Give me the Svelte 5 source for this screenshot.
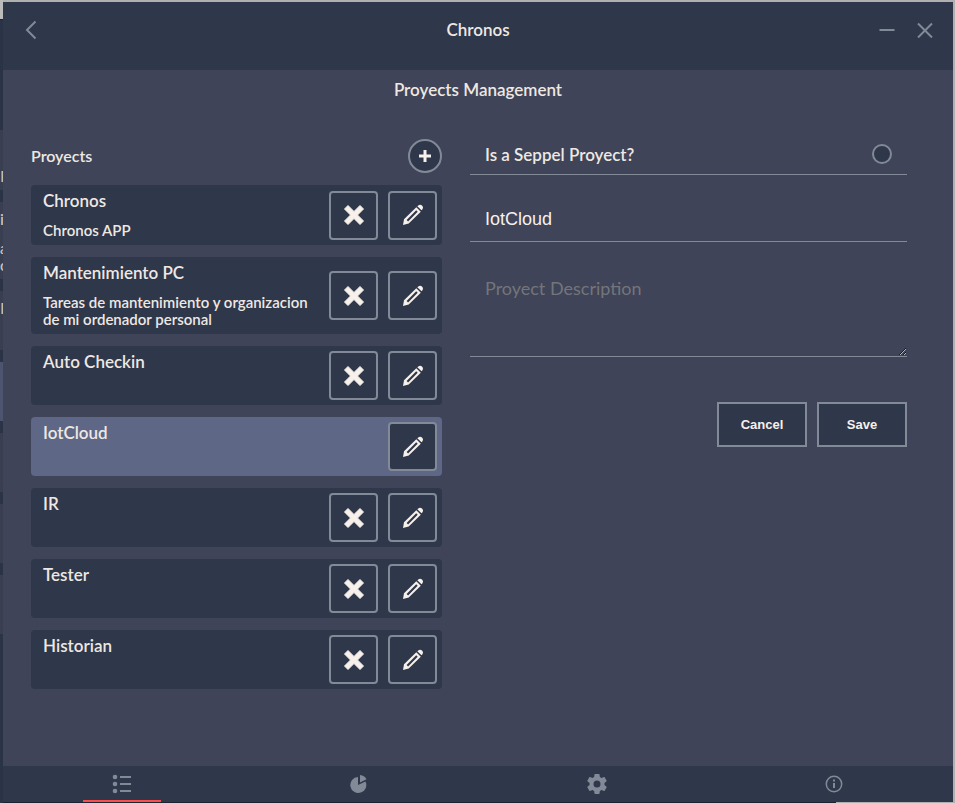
<script>
  let projects = $state([
    { name: 'Chronos', description: 'Chronos APP' },
    { name: 'Mantenimiento PC', description: 'Tareas de mantenimiento y organizacion de mi ordenador personal' },
    { name: 'Auto Checkin', description: '' },
    { name: 'IotCloud', description: '' },
    { name: 'IR', description: '' },
    { name: 'Tester', description: '' },
    { name: 'Historian', description: '' }
  ]);
  let selected = $state('IotCloud');
  let name = $state('IotCloud');
  let description = $state('');
  let seppel = $state(false);

  function edit(project) {
    selected = project.name;
    name = project.name;
    description = project.description;
  }

  function remove(project) {
    projects = projects.filter((p) => p !== project);
  }
</script>

<div class="desktop">
  <div class="behind" aria-hidden="true">
    <div class="strip title"></div>
    <div class="strip bar"></div>
    <div class="strip head">P</div>
    <div class="strip tall"><b>i</b><span>a</span><span>o</span></div>
    <div class="strip">I</div>
    <div class="strip active"></div>
    <div class="strip"></div>
    <div class="strip"></div>
    <div class="strip"></div>
  </div>

  <div class="window">
    <header>
      <div class="controls back">
        <button class="plain" aria-label="Back">
          <svg width="12" height="20" viewBox="0 0 12 20"><path d="M10.500 1.500L2 10l8.500 8.500" /></svg>
        </button>
      </div>
      <h1>Chronos</h1>
      <div class="controls">
        <button class="plain" aria-label="Minimize">
          <svg width="16" height="16" viewBox="0 0 16 16"><path d="M0.500 8h15" /></svg>
        </button>
        <button class="plain" aria-label="Close">
          <svg width="16" height="16" viewBox="0 0 16 16"><path d="M1 1.500l14 14M15 1.500L1 15.500" /></svg>
        </button>
      </div>
    </header>

    <main>
      <h2>Proyects Management</h2>
      <div class="columns">
        <section>
          <div class="list-head">
            <h3>Proyects</h3>
            <button class="add" aria-label="Add proyect">
              <svg width="12" height="12" viewBox="0 0 12 12"><path d="M6 0v12M0 6h12" /></svg>
            </button>
          </div>
          <ul>
            {#each projects as project (project.name)}
              <li class:selected={project.name === selected}>
                <div class="info">
                  <h4>{project.name}</h4>
                  {#if project.description}<p>{project.description}</p>{/if}
                </div>
                {#if project.name !== selected}
                  <button class="square" aria-label="Delete {project.name}" onclick={() => remove(project)}>
                    <svg width="20" height="20" viewBox="0 0 20 20">
                      <path d="M4 0.500L10 6.500l6-6L19.500 4l-6 6 6 6-3.500 3.500-6-6-6 6L0.500 16l6-6-6-6z" stroke="currentColor" stroke-linejoin="round" />
                    </svg>
                  </button>
                {/if}
                <button class="square" aria-label="Edit {project.name}" onclick={() => edit(project)}>
                  <svg width="22" height="22" viewBox="0 0 22 22">
                    <path fill-rule="evenodd" d="M14.300 3.200l4.500 4.500L6.700 19.600 1 21l1-5.700zM14.200 6.300L4.600 15.900l1.500 1.500 9.600-9.600z" />
                    <path d="M15.300 2.300l1-0.900c1.200-1.100 2.600-0.900 3.700 0.200 1.200 1.200 1.400 2.600 0.300 3.800l-0.800 0.900z" />
                  </svg>
                </button>
              </li>
            {/each}
          </ul>
        </section>

        <form onsubmit={(e) => e.preventDefault()}>
          <label class="check">
            <span>Is a Seppel Proyect?</span>
            <input type="checkbox" bind:checked={seppel} />
          </label>
          <input class="field" type="text" aria-label="Proyect Name" placeholder="Proyect Name" bind:value={name} />
          <textarea class="field" aria-label="Proyect Description" placeholder="Proyect Description" bind:value={description}></textarea>
          <div class="actions">
            <button type="button">Cancel</button>
            <button type="submit">Save</button>
          </div>
        </form>
      </div>
    </main>

    <nav>
      <a href="#list" class="current" aria-label="Proyects">
        <svg width="20" height="20" viewBox="0 0 20 20">
          <circle cx="3" cy="3" r="2.300" /><circle cx="3" cy="10" r="2.300" /><circle cx="3" cy="17" r="2.300" />
          <path d="M8 2h11v2H8zM8 9h11v2H8zM8 16h11v2H8z" />
        </svg>
      </a>
      <a href="#stats" aria-label="Statistics">
        <svg width="20" height="20" viewBox="0 0 20 20">
          <path d="M9 3v8l7.500-3.500A8 8 0 1 1 9 3z" /><path d="M11 1a8 8 0 0 1 6.500 4.300L11 8.500z" />
        </svg>
      </a>
      <a href="#settings" aria-label="Settings">
        <svg width="22" height="22" viewBox="1 1 22 22">
          <path d="M19.430 12.980c.04-.32.07-.64.07-.98s-.03-.66-.07-.98l2.110-1.650c.19-.15.24-.42.12-.64l-2-3.460c-.12-.22-.39-.3-.61-.22l-2.490 1c-.52-.4-1.080-.73-1.690-.98l-.38-2.650C14.460 2.180 14.250 2 14 2h-4c-.25 0-.46.18-.49.42l-.38 2.650c-.61.25-1.170.59-1.690.98l-2.490-1c-.23-.09-.49 0-.61.22l-2 3.460c-.13.22-.07.49.12.64l2.110 1.650c-.04.32-.07.65-.07.98s.03.66.07.98l-2.110 1.650c-.19.15-.24.42-.12.64l2 3.460c.12.22.39.3.61.22l2.490-1c.52.4 1.080.73 1.690.98l.38 2.650c.03.24.24.42.49.42h4c.25 0 .46-.18.49-.42l.38-2.650c.61-.25 1.170-.59 1.690-.98l2.490 1c.23.09.49 0 .61-.22l2-3.460c.12-.22.07-.49-.12-.64zM12 15.500a3.500 3.500 0 1 1 0-7 3.500 3.500 0 0 1 0 7z" />
        </svg>
      </a>
      <a href="#about" aria-label="About">
        <svg width="20" height="20" viewBox="0 0 20 20">
          <circle cx="10" cy="10" r="7.700" fill="none" stroke="currentColor" stroke-width="1.500" />
          <path d="M9 5.500h2v2H9zM9 9h2v5H9z" />
        </svg>
      </a>
    </nav>
  </div>
</div>

<style>
  :global(body) {
    margin: 0;
  }
  .desktop {
    box-sizing: border-box;
    position: relative;
    min-height: 100vh;
    padding: 2px 2px 1px 3px;
    display: flex;
    background: linear-gradient(90deg, #1e2230 836px, transparent 836px) bottom / 100% 1px no-repeat, #b0b0b0;
    font-family: Lato, 'Liberation Sans', sans-serif;
    color: #eee8e3;
  }
  .behind {
    position: absolute;
    inset: 0 auto 0 0;
    width: 3px;
    overflow: hidden;
    background: #2b3446;
    color: #c5c2bf;
    font-size: 16px;
  }
  .strip {
    height: 59px;
    margin-bottom: 12px;
    background: #393e50;
    line-height: 34px;
  }
  .strip.title {
    height: 19px;
    margin: 0;
    background: #bbb;
    border-bottom: 1px solid #222;
  }
  .strip.bar {
    height: 110px;
    margin: 0;
    background: #2b3446;
  }
  .strip.head {
    height: 60px;
    line-height: 92px;
  }
  .strip.tall {
    height: 77px;
  }
  .strip b,
  .strip span {
    display: block;
    font-weight: 600;
  }
  .strip span {
    font-size: 15px;
    line-height: 17px;
  }
  .strip b + span {
    margin-top: 4px;
  }
  .strip.active {
    background: #4c5470;
  }
  .window {
    flex: 1;
    min-width: 0;
    display: flex;
    flex-direction: column;
    background: #3f4458;
  }
  button {
    box-sizing: border-box;
    padding: 0;
    border: 2px solid #828a98;
    background: #2f374a;
    color: #f7f0eb;
    display: flex;
    align-items: center;
    justify-content: center;
    cursor: pointer;
  }
  svg {
    display: block;
    fill: currentColor;
  }
  header {
    box-sizing: border-box;
    height: 68px;
    padding: 18px 20px;
    display: grid;
    grid-template-columns: 1fr auto 1fr;
    align-items: start;
    background: #2f374a;
  }
  .plain {
    border: 0;
    background: none;
    color: #828a98;
    height: 20px;
  }
  .plain svg {
    fill: none;
    stroke: currentColor;
    stroke-width: 2;
  }
  .controls {
    display: flex;
    justify-content: flex-end;
    gap: 22px;
  }
  .controls.back {
    justify-content: flex-start;
    padding-left: 2px;
  }
  h1,
  h2,
  h3,
  h4,
  p,
  ul {
    margin: 0;
    padding: 0;
    font-size: 17px;
    line-height: 20px;
    font-weight: 600;
  }
  h2 {
    text-align: center;
    padding: 10px 0 38px;
  }
  main {
    flex: 1;
  }
  .columns {
    display: grid;
    grid-template-columns: 411fr 437fr;
    gap: 28px;
    padding: 0 46px 24px 28px;
  }
  .list-head {
    display: flex;
    align-items: center;
    justify-content: space-between;
    height: 36px;
    margin-bottom: 11px;
  }
  h3 {
    font-size: 16px;
  }
  .add {
    width: 34px;
    height: 34px;
    border-radius: 50%;
  }
  .add path {
    stroke: currentColor;
    stroke-width: 3;
  }
  ul {
    list-style: none;
    display: flex;
    flex-direction: column;
    gap: 12px;
  }
  li {
    box-sizing: border-box;
    min-height: 59px;
    padding: 0 5px 0 12px;
    display: flex;
    align-items: center;
    gap: 10px;
    border-radius: 4px;
    background: #2f374a;
  }
  li.selected {
    background: #5e6785;
  }
  .info {
    flex: 1;
    align-self: stretch;
    padding: 6px 0;
  }
  p {
    margin-top: 11px;
    font-size: 15px;
    line-height: 17px;
  }
  .square {
    flex: none;
    width: 49px;
    height: 49px;
    border-radius: 4px;
  }
  form {
    display: flex;
    flex-direction: column;
  }
  .check {
    box-sizing: border-box;
    height: 37px;
    padding: 0 15px;
    display: flex;
    align-items: flex-start;
    justify-content: space-between;
    border-bottom: 1px solid #828a98;
    font-size: 17px;
    line-height: 20px;
    font-weight: 600;
  }
  .check span {
    padding-top: 7px;
  }
  .check input {
    appearance: none;
    box-sizing: border-box;
    width: 20px;
    height: 20px;
    margin: 6px 0 0;
    border: 2px solid #828a98;
    border-radius: 50%;
    background: #2f374a;
  }
  .check input:checked {
    background: #f7f0eb;
  }
  .field {
    box-sizing: border-box;
    width: 100%;
    margin: 22px 0 0;
    padding: 0 15px;
    height: 45px;
    border: 0;
    border-bottom: 1px solid #828a98;
    outline: 0;
    background: none;
    color: #f7f0eb;
    font: 18px 'Liberation Sans', sans-serif;
  }
  textarea.field {
    height: 93px;
    padding-top: 13px;
    font-family: Lato, sans-serif;
    resize: vertical;
  }
  .field::placeholder {
    color: #74757a;
  }
  .actions {
    display: flex;
    justify-content: flex-end;
    gap: 10px;
    margin-top: 45px;
  }
  .actions button {
    width: 90px;
    height: 45px;
    font: bold 13px 'Liberation Sans', sans-serif;
  }
  nav {
    height: 36px;
    display: grid;
    grid-template-columns: repeat(4, 1fr);
    background: #2f374a;
  }
  nav a {
    position: relative;
    display: flex;
    align-items: center;
    justify-content: center;
    color: #828a98;
  }
  nav a.current::after {
    content: '';
    position: absolute;
    bottom: 0;
    width: 78px;
    height: 2px;
    background: #fb4d4d;
  }
</style>
